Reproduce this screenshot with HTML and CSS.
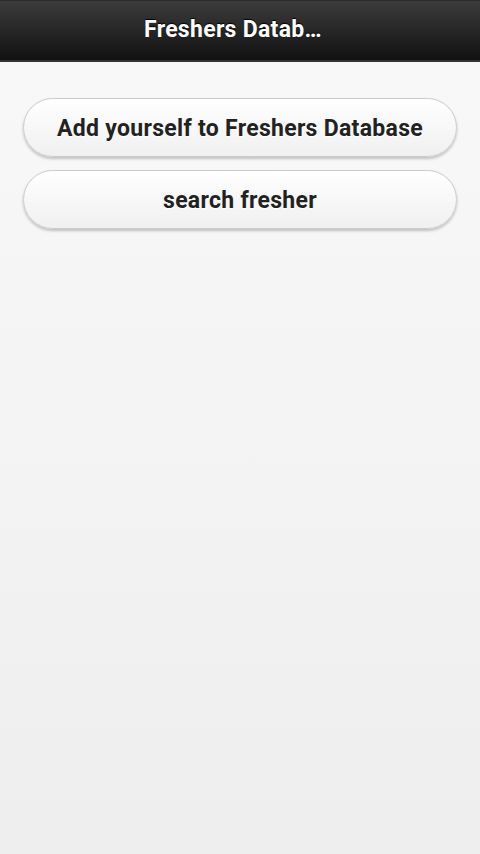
FILE: index.html
```html
<!DOCTYPE html>
<html>
<head>
<meta charset="utf-8">
<link rel="stylesheet" href="styles.css">
</head>
<body>
<div class="page">
  <header class="bar">
    <h1 class="title">Freshers Database</h1>
  </header>
  <main class="content">
    <a class="btn">Add yourself to Freshers Database</a>
    <a class="btn">search fresher</a>
  </main>
</div>
</body>
</html>
```

FILE: styles.css
```css
html, body {
  margin: 0;
  padding: 0;
  height: 100%;
}
body {
  font-family: Roboto, "Liberation Sans", sans-serif;
  background: #eeeeee;
}
.page {
  min-height: 854px;
  display: flex;
  flex-direction: column;
  background: linear-gradient(#f9f9f9, #eeeeee);
}
.bar {
  height: 62px;
  box-sizing: border-box;
  background: linear-gradient(#3c3c3c, #111111);
  border-bottom: 2px solid #333;
  border-top: 1px solid #2a2a2a;
  display: flex;
  align-items: center;
}
.title {
  margin: 0 30%;
  width: 40%;
  box-sizing: border-box;
  padding: 0 12px 3px 0;
  text-align: center;
  font-size: 23px;
  letter-spacing: 0.3px;
  font-weight: 700;
  color: #fff;
  text-shadow: 0 -1px 1px #000;
  white-space: nowrap;
  overflow: hidden;
  text-overflow: ellipsis;
}
.content {
  padding: 36px 23px;
  display: flex;
  flex-direction: column;
  gap: 13px;
}
.btn {
  display: flex;
  align-items: center;
  justify-content: center;
  height: 59px;
  box-sizing: border-box;
  border: 1px solid #cccccc;
  border-radius: 30px;
  background: linear-gradient(#ffffff, #f0f0f0);
  box-shadow: 0 2px 3px rgba(0,0,0,0.22);
  font-size: 23px;
  letter-spacing: 0.3px;
  font-weight: 700;
  color: #222;
  text-shadow: 0 1px 0 #fff;
  padding-top: 2px;
}
```
